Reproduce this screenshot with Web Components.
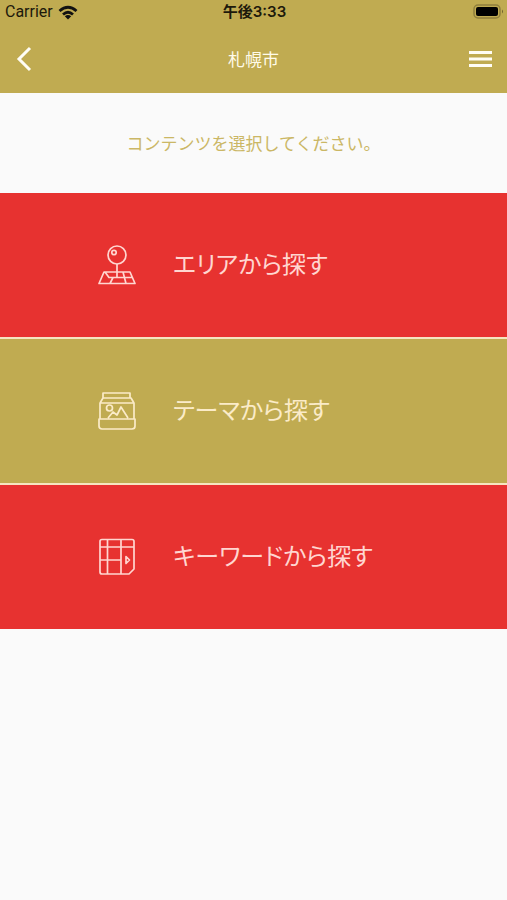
<!DOCTYPE html>
<html lang="ja">
<head>
<meta charset="utf-8">
<meta name="viewport" content="width=device-width, initial-scale=1">
<title>札幌市</title>
<style>
  body { margin: 0; background: #fafafa; }
</style>
</head>
<body>
<guide-app></guide-app>

<template id="t-app">
  <style>
    :host {
      --gold: #c0ab51;
      --red: #e73230;
      display: flex; flex-direction: column; min-height: 100vh;
      background: #fafafa;
      font-family: "Noto Sans CJK JP", sans-serif;
    }
    header { background: var(--gold); }
    main { display: flex; flex-direction: column; }
    p { margin: 0; padding: 38px 16px; font-size: 17px; line-height: 24px; text-align: center; color: #cbb765; }
    nav { display: flex; flex-direction: column; gap: 2px; background: #f6e5c0; }
  </style>
  <header>
    <status-bar></status-bar>
    <title-bar>札幌市</title-bar>
  </header>
  <main>
    <p>コンテンツを選択してください。</p>
    <nav>
      <menu-tile tone="red">
        <svg slot="icon" viewBox="0 0 40 40"><circle cx="20" cy="10" r="9"/><circle cx="17" cy="7.500" r="2.200"/><path d="M20 19v13M7 27h26l5 11.500H2zM8 27l4 5.500h23M13 38.500l3-6M26 27l3 11.500"/></svg>
        エリアから探す
      </menu-tile>
      <menu-tile tone="gold">
        <svg slot="icon" viewBox="0 0 40 40"><path d="M6 7V2h27v5M3 12l3-5h28l3 5M3 28V12h34v16M2 28h36v7q0 3-3 3H5q-3 0-3-3zM11 27l5-6 4 3 4-8 7 11"/><circle cx="12.500" cy="17" r="3"/></svg>
        テーマから探す
      </menu-tile>
      <menu-tile tone="red">
        <svg slot="icon" viewBox="0 0 40 40"><path d="M5 2.500h30q2 0 2 2V32l-5 5H5q-2 0-2-2V4.500q0-2 2-2zM3 10h34M10.500 2.500V37M24 2.500V37M3 23h21M29 19.500l3.500 3.500-3.500 3.500z"/></svg>
        キーワードから探す
      </menu-tile>
    </nav>
  </main>
</template>

<template id="t-status">
  <style>
    :host {
      display: grid; grid-template-columns: 1fr auto 1fr; align-items: center;
      height: 24px; padding: 0 3px 0 5px; color: #1d190b;
      font-family: Inter, "Noto Sans CJK JP", sans-serif; font-size: 15px; line-height: 24px;
    }
    .net { display: flex; align-items: center; gap: 5px; font-family: Roboto, sans-serif; font-size: 16px; }
    time { font-weight: 600; }
    svg { display: block; }
    .battery { justify-self: end; }
  </style>
  <span class="net"><span>Carrier</span>
    <svg width="20" height="15" viewBox="0 0 20 15" fill="none" stroke="#111" stroke-width="2.800" aria-hidden="true"><path d="M1.500 6q8.500-7.500 17 0M5 9.500q5-4.400 10 0"/><path d="M10 14.500l-3.200-3.200q3.200-2.400 6.400 0z" fill="#111" stroke="none"/></svg>
  </span>
  <time datetime="15:33">午後3:33</time>
  <svg class="battery" width="31" height="16" viewBox="0 0 31 16" aria-hidden="true"><rect x="1" y="1" width="26" height="13" rx="4" fill="none" stroke="#8f7f3c" stroke-width="1.500"/><rect x="3" y="3" width="22" height="9" rx="2" fill="#000"/><path d="M29 5.500q2 2 0 4z" fill="#6f622e"/></svg>
</template>

<template id="t-title">
  <style>
    :host {
      display: grid; grid-template-columns: 48px 1fr 48px; align-items: center;
      height: 69px; color: #fffbea;
    }
    h1 { margin: 0; font-size: 17px; line-height: 24px; font-weight: 400; text-align: center; }
    button { display: grid; place-items: center; height: 48px; padding: 0; border: 0; background: none; color: #fffdf5; cursor: pointer; }
    .menu { padding-right: 6px; }
    svg { display: block; fill: none; stroke: currentColor; stroke-width: 3; }
  </style>
  <button type="button" aria-label="戻る"><svg width="18" height="26" viewBox="0 0 18 26"><path d="M15 2L4 13l11 11"/></svg></button>
  <h1><slot></slot></h1>
  <button class="menu" type="button" aria-label="メニュー"><svg width="24" height="18" viewBox="0 0 24 18"><path d="M1 2.500h23M1 9h23M1 15.500h23"/></svg></button>
</template>

<template id="t-tile">
  <style>
    :host { display: block; background: var(--red); }
    :host([tone="gold"]) { background: var(--gold); }
    button {
      display: flex; align-items: center; gap: 36px; width: 100%;
      padding: 52px 16px 52px 97px; border: 0; background: none; cursor: pointer;
      color: #ffd6d0; font: inherit; font-size: 24px; line-height: 36px; text-align: left;
    }
    :host([tone="gold"]) button { color: #fbebc8; }
    .label { padding-bottom: 4px; font-feature-settings: "palt"; }
    ::slotted(svg) {
      display: block; width: 40px; height: 40px; flex: none;
      fill: none; stroke: currentColor; stroke-width: 1.700; stroke-linejoin: round;
    }
  </style>
  <button type="button"><slot name="icon"></slot><span class="label"><slot></slot></span></button>
</template>

<script>
  const define = (name, id) => customElements.define(name, class extends HTMLElement {
    constructor() {
      super();
      this.attachShadow({ mode: "open" }).append(document.getElementById(id).content.cloneNode(true));
    }
  });
  define("status-bar", "t-status");
  define("title-bar", "t-title");
  define("menu-tile", "t-tile");
  define("guide-app", "t-app");
</script>
</body>
</html>
